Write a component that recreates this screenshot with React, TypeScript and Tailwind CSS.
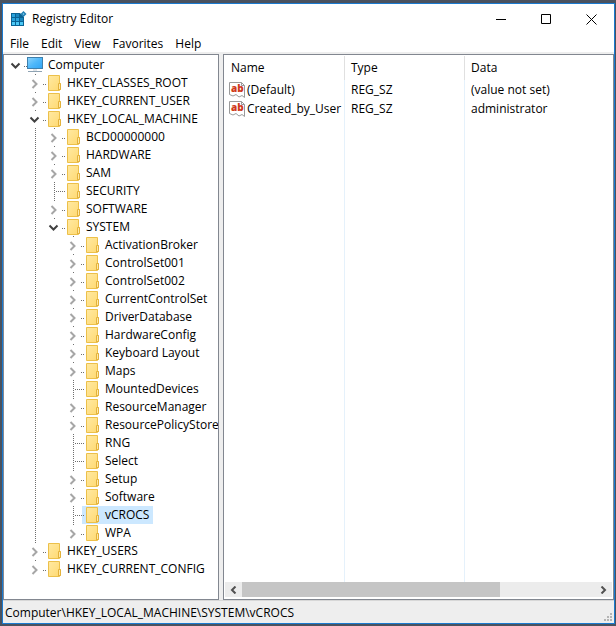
import React from "react";

type State = "open" | "closed" | "leaf";

interface Node {
  name: string;
  depth: number;
  state: State;
  guides?: boolean[];
  last?: boolean;
  selected?: boolean;
}

const hive = (name: string, state: State = "closed", last = false): Node => ({ name, depth: 1, state, guides: [false], last });
const key = (name: string, state: State = "closed", last = false): Node => ({ name, depth: 2, state, guides: [false, true], last });
const sub = (name: string, state: State = "closed", last = false, selected = false): Node => ({
  name,
  depth: 3,
  state,
  guides: [false, true, false],
  last,
  selected,
});

const NODES: Node[] = [
  { name: "Computer", depth: 0, state: "open", guides: [], last: true },
  hive("HKEY_CLASSES_ROOT"),
  hive("HKEY_CURRENT_USER"),
  hive("HKEY_LOCAL_MACHINE", "open"),
  key("BCD00000000"),
  key("HARDWARE"),
  key("SAM"),
  key("SECURITY", "leaf"),
  key("SOFTWARE"),
  key("SYSTEM", "open", true),
  sub("ActivationBroker"),
  sub("ControlSet001"),
  sub("ControlSet002"),
  sub("CurrentControlSet"),
  sub("DriverDatabase"),
  sub("HardwareConfig"),
  sub("Keyboard Layout"),
  sub("Maps"),
  sub("MountedDevices", "leaf"),
  sub("ResourceManager"),
  sub("ResourcePolicyStore"),
  sub("RNG", "leaf"),
  sub("Select", "leaf"),
  sub("Setup"),
  sub("Software"),
  sub("vCROCS", "leaf", false, true),
  sub("WPA", "closed", true),
  hive("HKEY_USERS"),
  hive("HKEY_CURRENT_CONFIG", "closed", true),
];

const VALUES = [
  { name: "(Default)", type: "REG_SZ", data: "(value not set)" },
  { name: "Created_by_User", type: "REG_SZ", data: "administrator" },
];

const DOT = "#6e6e6e";

function Guide({ on }: { on: boolean }) {
  return (
    <svg width="19" height="18" className="shrink-0" aria-hidden="true">
      {on && <path d="M10.5 0V18" stroke={DOT} strokeDasharray="1 1" />}
    </svg>
  );
}

function Branch({ node }: { node: Node }) {
  const { state, depth, last } = node;
  return (
    <svg width="19" height="18" className="relative shrink-0 overflow-visible" aria-hidden="true">
      {state === "leaf" ? (
        <>
          <path d={last ? "M10.5 0V10" : "M10.5 0V18"} stroke={DOT} strokeDasharray="1 1" />
          <path d="M12 9.5H21" stroke={DOT} strokeDasharray="1 1" />
        </>
      ) : (
        <>
          {depth > 0 && <path d="M10.5 0V2" stroke={DOT} strokeDasharray="1 1" />}
          <path d="M18 10.5H21" stroke={DOT} strokeDasharray="1 1" />
        </>
      )}
      {state === "open" && <path d="M5.5 7.5L9.5 11.5L13.5 7.5" fill="none" stroke="#404040" strokeWidth="2" />}
      {state === "closed" && <path d="M7.5 6L11.5 10L7.5 14" fill="none" stroke="#a6a6a6" strokeWidth="2" />}
    </svg>
  );
}

function Folder() {
  return (
    <svg width="13" height="16" viewBox="0 0 13 16" aria-hidden="true">
      <defs>
        <linearGradient id="folder" x1="0" y1="0" x2="1" y2="1">
          <stop offset="0" stopColor="#ffe9a2" />
          <stop offset="1" stopColor="#ffd970" />
        </linearGradient>
      </defs>
      <path d="M0.5 0.5H11.5V8.5H12.5V14.5H11.5V15.5H0.5Z" fill="url(#folder)" stroke="#ecc04a" />
      <path d="M10.5 15V8.5H12.5V14.5H10.5" fill="#ffe9a6" stroke="#e3b23c" />
    </svg>
  );
}

function Monitor() {
  return (
    <svg width="17" height="16" viewBox="0 0 17 16" aria-hidden="true">
      <defs>
        <linearGradient id="screen" x1="0" y1="0" x2="1" y2="1">
          <stop offset="0" stopColor="#8fd4fb" />
          <stop offset="0.5" stopColor="#4fb8fa" />
          <stop offset="1" stopColor="#2fa4f5" />
        </linearGradient>
      </defs>
      <rect x="0.5" y="0.5" width="15" height="11" fill="url(#screen)" stroke="#3f80ad" />
      <path d="M6 12H10V14H6Z" fill="#dfe4e8" />
      <path d="M1 14.5H15" stroke="#8fa3b3" />
    </svg>
  );
}

function StringIcon() {
  return (
    <svg width="16" height="16" viewBox="0 0 16 16" className="shrink-0" aria-hidden="true">
      <path d="M0.5 0.5H12.5L15.5 3.5V15.5L13 13.5L10 15L7 12.5L4 14L0.5 12.5Z" fill="#fff" stroke="#9a9a9a" />
      <path d="M12.5 0.5V3.5H15.5" fill="none" stroke="#9a9a9a" />
      <text x="2" y="10" fontFamily="Open Sans, sans-serif" fontWeight="800" fontSize="10" fill="#d03a1c">
        ab
      </text>
    </svg>
  );
}

function AppIcon() {
  return (
    <svg width="16" height="16" viewBox="0 0 16 16" aria-hidden="true">
      <path d="M0 2H9L13 6V15H0Z" fill="#0a6394" />
      <path d="M1 3H4V6H1ZM1 7H4V10H1ZM5 7H8V10H5Z" fill="#2aa3dc" />
      <path d="M5 3H8V6H5ZM9 7H12V10H9Z" fill="#1b86bd" />
      <path d="M1 11H4V14H1ZM5 11H8V14H5ZM9 11H12V14H9Z" fill="#4cc8f5" />
      <path d="M12.5 0L15.5 3L12.5 6L9.5 3Z" fill="#2380b4" />
      <path d="M12.5 2L13.5 3L12.5 4L11.5 3Z" fill="#7fd0f2" />
    </svg>
  );
}

function TitleBar() {
  return (
    <header className="flex h-[30px] shrink-0 items-center bg-white pl-2">
      <AppIcon />
      <h1 className="grow pl-[5px]">Registry Editor</h1>
      <button aria-label="Minimize" className="flex h-7 w-[45px] items-center justify-center">
        <svg width="11" height="11"><path d="M0 5.5H10" stroke="#000" /></svg>
      </button>
      <button aria-label="Maximize" className="flex h-7 w-[45px] items-center justify-center">
        <svg width="11" height="11"><path d="M0.5 0.5H9.5V9.5H0.5Z" fill="none" stroke="#000" /></svg>
      </button>
      <button aria-label="Close" className="flex h-7 w-[45px] items-center justify-center">
        <svg width="11" height="11"><path d="M0.5 0.5L10.5 10.5M10.5 0.5L0.5 10.5" stroke="#000" /></svg>
      </button>
    </header>
  );
}

function MenuBar() {
  return (
    <nav className="flex h-[18px] shrink-0 items-end gap-3 bg-white pl-[7px]">
      {["File", "Edit", "View", "Favorites", "Help"].map((m) => (
        <button key={m}>{m}</button>
      ))}
    </nav>
  );
}

function Tree() {
  return (
    <ul className="w-[216px] shrink-0 overflow-hidden border border-[#828790] bg-white pt-px pl-[2px]">
      {NODES.map((n) => (
        <li key={n.name} className="flex h-[18px] items-center">
          {n.guides?.map((g, i) => <Guide key={i} on={g} />)}
          <Branch node={n} />
          <button className={`flex h-[18px] items-center pr-1 whitespace-nowrap ${n.selected ? "bg-[#cce8ff]" : ""}`}>
            <span className={`w-[23px] shrink-0 ${n.depth === 0 ? "pl-[2px]" : "pl-1"}`}>
              {n.depth === 0 ? <Monitor /> : <Folder />}
            </span>
            {n.name}
          </button>
        </li>
      ))}
    </ul>
  );
}

function Values() {
  const head = "border-r border-[#e0e0e0] pl-[6px] text-left font-normal";
  const cell = "border-r border-[#e5f1fb] pl-[6px] whitespace-nowrap";
  return (
    <section className="flex min-w-0 grow flex-col border border-[#828790] bg-white p-px">
      <table className="w-full grow table-fixed border-separate border-spacing-0">
        <colgroup>
          <col className="w-[120px]" />
          <col className="w-[120px]" />
          <col />
        </colgroup>
        <thead>
          <tr className="h-6">
            <th className={head}>Name</th>
            <th className={head}>Type</th>
            <th className="pl-[6px] text-left font-normal">Data</th>
          </tr>
        </thead>
        <tbody>
          {VALUES.map((v) => (
            <tr key={v.name} className="h-[19px]">
              <td className="border-r border-[#e5f1fb] pl-1 whitespace-nowrap">
                <span className="flex items-center gap-[2px]">
                  <StringIcon />
                  {v.name}
                </span>
              </td>
              <td className={cell}>{v.type}</td>
              <td className="pl-[6px] whitespace-nowrap">{v.data}</td>
            </tr>
          ))}
          <tr>
            <td className={cell} />
            <td className={cell} />
            <td />
          </tr>
        </tbody>
      </table>
      <div className="mb-px flex h-[15px] shrink-0 bg-[#ececec]">
        <button aria-label="Scroll left" className="flex w-[17px] items-center justify-center">
          <svg width="7" height="8"><path d="M5.5 0.5L2 4L5.5 7.5" fill="none" stroke="#505050" strokeWidth="2" /></svg>
        </button>
        <div className="flex grow">
          <div className="w-[73%] bg-[#c5c5c5]" />
        </div>
        <button aria-label="Scroll right" className="flex w-[17px] items-center justify-center">
          <svg width="7" height="8"><path d="M1.5 0.5L5 4L1.5 7.5" fill="none" stroke="#505050" strokeWidth="2" /></svg>
        </button>
      </div>
    </section>
  );
}

function StatusBar() {
  return (
    <footer className="flex h-[23px] shrink-0 items-center border-t border-[#d7d7d7] bg-[#eeeeee] pl-[2px]">
      <span className="grow pt-px">Computer\HKEY_LOCAL_MACHINE\SYSTEM\vCROCS</span>
      <svg width="8" height="8" className="mr-[2px] mb-[2px] self-end" aria-hidden="true">
        <path d="M6 0h2v2h-2zM3 3h2v2h-2zM6 3h2v2h-2zM0 6h2v2h-2zM3 6h2v2h-2zM6 6h2v2h-2z" fill="#b4b4b4" />
      </svg>
    </footer>
  );
}

export default function App() {
  return (
    <div className="flex h-screen min-h-[600px] flex-col bg-[#4a525f] pt-[3px] pr-px pb-[2px] pl-[2px] font-['Segoe_UI','Open_Sans','Noto_Sans',sans-serif] text-[12px] leading-4 text-black">
      <div className="flex min-h-0 grow flex-col border border-[#1a7ad0] bg-[#eeeeee]">
        <TitleBar />
        <MenuBar />
        <main className="flex min-h-0 grow gap-1 pt-[2px]">
          <Tree />
          <Values />
        </main>
        <StatusBar />
      </div>
    </div>
  );
}
